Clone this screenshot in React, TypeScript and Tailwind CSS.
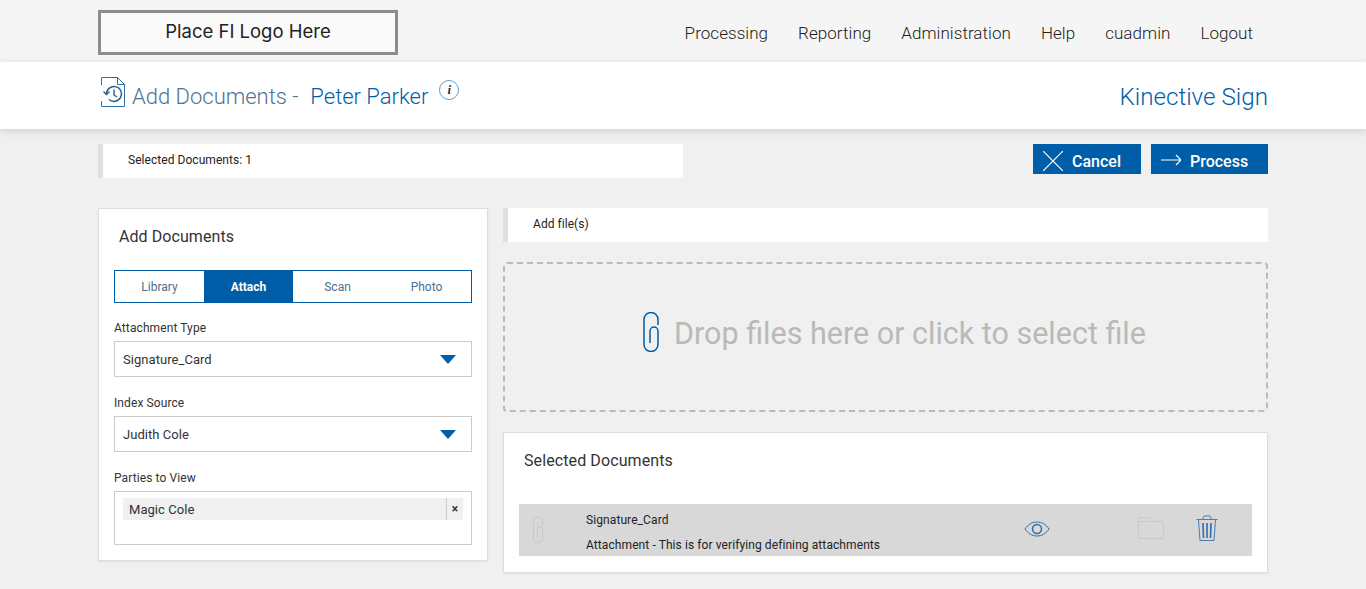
const blue = "#005ea8";

const Clip = ({ className, color = blue }: { className?: string; color?: string }) => (
  <svg viewBox="0 0 16 40" className={className} fill="none" stroke={color} strokeWidth="1.5">
    <path d="M15 13V7.500a7 7 0 0 0-14 0V32.500a7 7 0 0 0 14 0V19a4 4 0 0 0-8 0V31" />
  </svg>
);

const Arrow = () => <div className="w-0 h-0 border-x-8 border-x-transparent border-t-[9px] border-t-[#005ea8]" />;

const Select = ({ label, value }: { label: string; value: string }) => (
  <div>
    <div className="text-xs leading-4 tracking-[0.1px] text-[#333] mb-[5px]">{label}</div>
    <div className="h-9 border border-[#ccc] bg-white flex items-center justify-between pl-[8px] pr-[15px] text-[13px] tracking-[0.05px] text-[#333]">
      <span className="mt-[2px]">{value}</span>
      <Arrow />
    </div>
  </div>
);

const NoteBar = ({ text, className }: { text: string; className: string }) => (
  <div className={`h-[34px] bg-white border-l-[5px] border-[#e0e0e0] flex items-center pl-[25px] pb-[2px] text-xs tracking-[0.05px] text-[#222] ${className}`}>{text}</div>
);

export default function App() {
  return (
    <div className="w-[1366px] h-[589px] overflow-hidden bg-[#f0f0f0] font-['Roboto',sans-serif]">
      <div className="h-[62px] bg-[#f5f5f5]">
        <div className="w-[1170px] mx-auto flex justify-between pt-[10px]">
          <div className="w-[300px] h-[45px] border-[3px] border-[#8c8c8c] bg-[#fafafa] flex items-center justify-center pb-[2px] font-['Inter',sans-serif] text-[18.500px] text-[#222]">
            Place FI Logo Here
          </div>
          <nav className="flex gap-[30px] pr-[15px] pt-[13px] text-[17px] leading-5 tracking-[0.05px] font-light text-[#222]">
            <span>Processing</span>
            <span>Reporting</span>
            <span>Administration</span>
            <span>Help</span>
            <span>cuadmin</span>
            <span>Logout</span>
          </nav>
        </div>
      </div>

      <div className="relative h-[67px] bg-white shadow-[0_2px_8px_rgba(0,0,0,0.15)]">
        <div className="w-[1170px] mx-auto flex justify-between">
          <div className="flex items-start pl-[3px] pt-[15px]">
            <svg viewBox="0 0 24 30" className="w-[24px] h-[30px]" fill="none" stroke="#2f6ea8" strokeWidth="1">
              <path d="M.5 8V.5h16l7 7v22H.5V24" />
              <path d="M16.500 .5v7h7" />
              <path d="M5.500 17a7.500 7.500 0 1 1 2.500 5.500" strokeWidth="1.500" stroke="#24608f" />
              <path d="M2.500 14.500l3 3 3-3" strokeWidth="1.300" stroke="#24608f" />
              <path d="M13 12.500v5.500l3 2" strokeWidth="1.400" stroke="#24608f" />
            </svg>
            <div className="ml-[7px] mt-[6px] text-[22px] leading-7 font-light text-[#4f7393] whitespace-pre">
              Add Documents -  <span className="ml-[1px] text-[#005ea8]">Peter Parker</span>
            </div>
            <div className="ml-[11px] mt-[3px] w-5 h-5 rounded-full border border-[#5f9ccf] flex items-center justify-center font-['Liberation_Serif',serif] italic font-bold text-[13px] text-[#333]">
              i
            </div>
          </div>
          <div className="pt-[21px] text-[24.200px] leading-7 font-light text-[#005ea8]">Kinective Sign</div>
        </div>
      </div>

      <div className="w-[1170px] mx-auto pt-[15px]">
        <div className="flex justify-between items-start">
          <NoteBar text="Selected Documents: 1" className="w-[585px]" />
          <div className="flex gap-[10px]">
            <div className="w-[108px] h-[30px] bg-[#005ea8] text-white flex items-center pl-[10px] pt-[5px] text-base font-medium">
              <svg viewBox="0 0 20 20" className="w-[20px] h-[20px] mr-[9px] -mt-[2px]" stroke="#fff" strokeWidth="1.200">
                <path d="M0 0l20 20M20 0L0 20" />
              </svg>
              Cancel
            </div>
            <div className="w-[117px] h-[30px] bg-[#005ea8] text-white flex items-center pl-[10px] pt-[5px] text-base font-medium">
              <svg viewBox="0 0 20 12" className="w-[20px] h-[12px] mr-[9px] -mt-[3px]" fill="none" stroke="#fff" strokeWidth="1.200">
                <path d="M0 6h20M15 1l5 5-5 5" />
              </svg>
              Process
            </div>
          </div>
        </div>

        <div className="flex gap-[15px] mt-[30px]">
          <div className="w-[390px] h-[353px] bg-white border border-[#ddd] shadow-[0_1px_2px_rgba(0,0,0,0.06)] px-[15px]">
            <div className="pt-[18px] pl-[5px] text-base leading-5 tracking-[0.07px] text-[#333]">Add Documents</div>
            <div className="mt-[23px] h-[33px] border border-[#005ea8] grid grid-cols-4 text-xs text-[#4a6f8f]">
              <div className="flex items-center justify-center">Library</div>
              <div className="flex items-center justify-center bg-[#005ea8] text-white font-bold">Attach</div>
              <div className="flex items-center justify-center">Scan</div>
              <div className="flex items-center justify-center">Photo</div>
            </div>
            <div className="flex flex-col gap-[18px] mt-[17px]">
              <Select label="Attachment Type" value="Signature_Card" />
              <Select label="Index Source" value="Judith Cole" />
              <div>
                <div className="text-xs leading-4 tracking-[0.1px] text-[#333] mb-[5px]">Parties to View</div>
                <div className="h-[54px] border border-[#ccc] pt-[6px] px-[8px]">
                  <div className="h-[22px] bg-[#f0f0f0] flex items-center pl-[6px] text-[13px] tracking-[0.05px] text-[#333]">
                    <span className="flex-1 mt-[2px]">Magic Cole</span>
                    <span className="w-[17px] h-full border-l border-[#ccc] flex items-center justify-center text-[12px] font-bold text-[#333]">×</span>
                  </div>
                </div>
              </div>
            </div>
          </div>

          <div className="w-[765px]">
            <NoteBar text="Add file(s)" className="" />
            <div className="mt-[20px] h-[150px] border-2 border-dashed border-[#bbb] rounded-[4px] flex items-center justify-center gap-[15px] pl-[18px] pb-[10px]">
              <Clip className="w-[16px] h-[40px]" />
              <span className="mt-[4px] text-[30.500px] text-[#b9b9b9]">Drop files here or click to select file</span>
            </div>
            <div className="mt-[20px] h-[141px] bg-white border border-[#ddd] shadow-[0_1px_2px_rgba(0,0,0,0.06)] px-[15px]">
              <div className="pt-[18px] pl-[5px] text-base leading-5 tracking-[0.1px] text-[#333]">Selected Documents</div>
              <div className="mt-[33px] h-[52px] bg-[#d8d8d8] flex items-center text-xs tracking-[0.09px] text-[#222]">
                <Clip className="w-[12px] h-[26px] ml-[13px]" color="#c6c6c6" />
                <div className="ml-[42px] w-[425px] leading-[25px] pt-[6px]">
                  <div>Signature_Card</div>
                  <div>Attachment - This is for verifying defining attachments</div>
                </div>
                <svg viewBox="0 0 26 16" className="w-[26px] h-[16px] ml-[13px] mb-[3px]" fill="none" stroke="#2f6ea8" strokeWidth="1">
                  <path d="M1 8c3-4.500 7-7 12-7s9 2.500 12 7c-3 4.500-7 7-12 7S4 12.500 1 8z" />
                  <circle cx="13" cy="8" r="4.500" strokeWidth="1.500" />
                </svg>
                <svg viewBox="0 0 26 22" className="w-[26px] h-[22px] ml-[88px] mb-[4px]" fill="none" stroke="#c9c9c9" strokeWidth="1">
                  <path d="M.5 21.500V.5h12l3 4h10v17z" />
                  <path d="M.5 4.500h15" />
                </svg>
                <svg viewBox="0 0 22 26" className="w-[22px] h-[26px] ml-[32px] mb-[4px]" fill="none" stroke="#4a7fae" strokeWidth="1">
                  <path d="M7 4.500V3a2 2 0 0 1 2-2h4a2 2 0 0 1 2 2v1.500" />
                  <path d="M.5 4.500h21M2.500 5l1.500 20.500h14L19.500 5" />
                  <path d="M7 8l.5 15M11 8v15M15 8l-.5 15" strokeWidth="1.600" stroke="#2f6ea8" />
                </svg>
              </div>
            </div>
          </div>
        </div>
      </div>
    </div>
  );
}
